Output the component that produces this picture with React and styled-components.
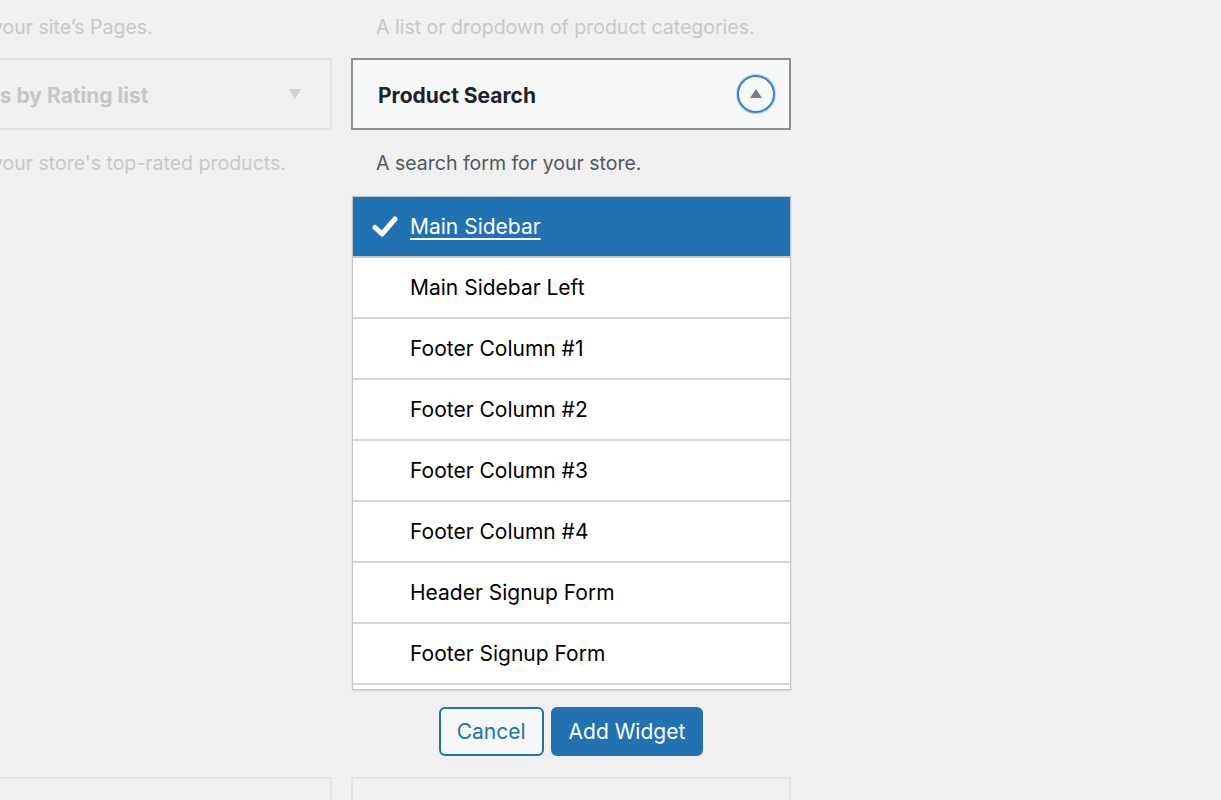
import React from "react";
import styled, { createGlobalStyle } from "styled-components";

const GlobalStyle = createGlobalStyle`
  html, body {
    margin: 0;
    padding: 0;
    background: #f0f0f1;
    overflow: hidden;
  }
  body {
    font-family: Inter, "Noto Sans", "Liberation Sans", sans-serif;
    -webkit-font-smoothing: antialiased;
  }
`;

const Page = styled.div`
  display: grid;
  grid-template-columns: 440px 440px;
  column-gap: 19px;
  margin-left: -108px;
  height: 800px;
  align-content: start;
`;

const Column = styled.div`
  display: flex;
  flex-direction: column;
`;

const Desc = styled.p`
  margin: ${(p) => p.$margin || "0"};
  padding-left: 25px;
  font-size: 19.5px;
  line-height: 26px;
  white-space: nowrap;
  color: ${(p) => (p.$faded ? "#c7c8ca" : "#50575e")};
`;

const WidgetBox = styled.div`
  box-sizing: border-box;
  height: 72px;
  display: flex;
  align-items: center;
  justify-content: space-between;
  padding: 0 14px 0 25px;
  border: 2px solid ${(p) => (p.$faded ? "#e3e3e4" : "#8c8f94")};
  background: ${(p) => (p.$faded ? "#f0f0f1" : "#f6f7f7")};
  margin-top: ${(p) => p.$top || "0"};
`;

const Title = styled.h3`
  margin: 2px 0 0;
  font-size: 21px;
  font-weight: 700;
  white-space: nowrap;
  color: ${(p) => (p.$faded ? "#c5c6c8" : "#1d2327")};
`;

const Toggle = styled.button`
  box-sizing: border-box;
  width: 38px;
  height: 38px;
  border-radius: 50%;
  border: 2px solid #3582c4;
  box-shadow: 0 0 1px 1px rgba(53, 130, 196, 0.35);
  background: transparent;
  display: flex;
  align-items: center;
  justify-content: center;
  padding: 0;
`;

const Arrow = styled.span`
  width: 0;
  height: 0;
  border-left: 6px solid transparent;
  border-right: 6px solid transparent;
  ${(p) =>
    p.$up
      ? "border-bottom: 9px solid #787c82; margin-bottom: 2px;"
      : "border-top: 10px solid #d2d3d5;"}
`;

const FadedArrowSlot = styled.span`
  display: flex;
  padding-right: 15px;
`;

const Chooser = styled.ul`
  list-style: none;
  margin: 20px 0 0 1px;
  padding: 0;
  box-sizing: border-box;
  height: 494px;
  overflow: hidden;
  border: 1px solid #c3c4c7;
  background: #fff;
  box-shadow: 0 1px 2px rgba(0, 0, 0, 0.12);
`;

const Item = styled.li`
  box-sizing: border-box;
  height: 61px;
  display: flex;
  align-items: center;
  padding-left: 57px;
  position: relative;
  font-size: 21px;
  color: #000;
  border-bottom: 2px solid #d4d5d7;
  background: ${(p) => (p.$selected ? "#2271b1" : "#fff")};
  ${(p) =>
    p.$selected &&
    `
    color: #fff;
    border-bottom-color: #c3c4c7;
    span { text-decoration: underline; text-underline-offset: 4px; text-decoration-thickness: 2px; }
  `}
`;

const Check = styled.svg`
  position: absolute;
  left: 19px;
  top: 19px;
`;

const Actions = styled.div`
  display: flex;
  justify-content: center;
  gap: 7px;
  margin-top: 17px;
`;

const Button = styled.button`
  box-sizing: border-box;
  height: 49px;
  padding: 0 16px;
  border-radius: 6px;
  font-family: inherit;
  font-size: 21px;
  line-height: 1;
  border: 2px solid #2271b1;
  background: ${(p) => (p.$primary ? "#2271b1" : "#f6f7f7")};
  color: ${(p) => (p.$primary ? "#fff" : "#2271b1")};
`;

const BottomBox = styled.div`
  box-sizing: border-box;
  height: 60px;
  border: 2px solid #e3e3e4;
  margin-top: ${(p) => p.$top || "0"};
`;

const areas = [
  "Main Sidebar",
  "Main Sidebar Left",
  "Footer Column #1",
  "Footer Column #2",
  "Footer Column #3",
  "Footer Column #4",
  "Header Signup Form",
  "Footer Signup Form",
  "Shop Sidebar",
];

export default function App() {
  return (
    <>
      <GlobalStyle />
      <Page>
        <Column>
          <Desc $faded $margin="14px 0 0">
            A list of your site’s Pages.
          </Desc>
          <WidgetBox $faded $top="18px">
            <Title $faded>Products by Rating list</Title>
            <FadedArrowSlot>
              <Arrow />
            </FadedArrowSlot>
          </WidgetBox>
          <Desc $faded $margin="20px 0 0">
            A list of your store's top-rated products.
          </Desc>
          <BottomBox $top="601px" />
        </Column>
        <Column>
          <Desc $faded $margin="14px 0 0">
            A list or dropdown of product categories.
          </Desc>
          <WidgetBox $top="18px">
            <Title>Product Search</Title>
            <Toggle aria-label="Collapse">
              <Arrow $up />
            </Toggle>
          </WidgetBox>
          <Desc $margin="20px 0 0">A search form for your store.</Desc>
          <Chooser>
            {areas.map((a, i) => (
              <Item key={a} $selected={i === 0}>
                {i === 0 && (
                  <Check width="26" height="22" viewBox="0 0 26 22">
                    <path
                      d="M3 11.5 L10 18 L23 3"
                      fill="none"
                      stroke="#fff"
                      strokeWidth="5"
                      strokeLinecap="round"
                      strokeLinejoin="round"
                    />
                  </Check>
                )}
                <span>{a}</span>
              </Item>
            ))}
          </Chooser>
          <Actions>
            <Button>Cancel</Button>
            <Button $primary>Add Widget</Button>
          </Actions>
          <BottomBox $top="21px" />
        </Column>
      </Page>
    </>
  );
}
